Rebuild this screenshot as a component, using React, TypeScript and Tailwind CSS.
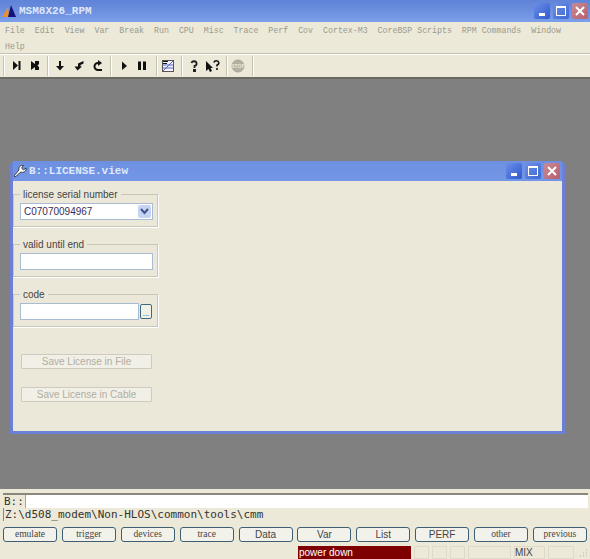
const menus = ["File", "Edit", "View", "Var", "Break", "Run", "CPU", "Misc", "Trace", "Perf", "Cov", "Cortex-M3", "CoreBSP Scripts", "RPM Commands", "Window", "Help"];

const bottomButtons = [
  { label: "emulate", big: false },
  { label: "trigger", big: false },
  { label: "devices", big: false },
  { label: "trace", big: false },
  { label: "Data", big: true },
  { label: "Var", big: true },
  { label: "List", big: true },
  { label: "PERF", big: true },
  { label: "other", big: false },
  { label: "previous", big: false },
];

const sep = <div className="h-[20px] w-[2px] shrink-0 border-l border-r border-l-[#c5c2b2] border-r-white" />;

const TbIcon = ({ children }: { children: React.ReactNode }) => (
  <svg width="16" height="16" viewBox="0 0 16 16" className="shrink-0">
    {children}
  </svg>
);

const CaptionButtons = () => (
  <div className="flex items-center gap-[3px]">
    <div className="flex h-[16px] w-[16px] items-end justify-center rounded-[2px] bg-gradient-to-br from-[#6d8fe6] to-[#2f58cf] pb-[3px]">
      <div className="h-[3px] w-[6px] bg-white" />
    </div>
    <div className="flex h-[16px] w-[16px] items-center justify-center rounded-[2px] bg-gradient-to-br from-[#6d8fe6] to-[#3d67d6]">
      <div className="h-[10px] w-[10px] border border-t-2 border-white" />
    </div>
    <div className="flex h-[16px] w-[16px] items-center justify-center rounded-[2px] bg-gradient-to-br from-[#c98a96] to-[#b5606c]">
      <svg width="10" height="10" viewBox="0 0 10 10">
        <path d="M1 1 L9 9 M9 1 L1 9" stroke="#fff" strokeWidth="2" />
      </svg>
    </div>
  </div>
);

const Group = ({ label, children }: { label: string; children: React.ReactNode }) => (
  <div className="relative h-[33px] w-[145px] border border-[#c9c7b8] shadow-[1px_1px_0_#fff]">
    <span className="absolute left-[6px] top-[-5px] bg-[#ebe8d9] px-[3px] text-[10px] leading-[10px] text-[#444]">{label}</span>
    {children}
  </div>
);

const App = () => {
  return (
    <div className="flex h-[559px] w-[590px] flex-col overflow-hidden bg-[#ece9d8] font-['Liberation_Sans',sans-serif]">
      {/* main title bar */}
      <div className="flex h-[22px] shrink-0 items-center justify-between bg-gradient-to-b from-[#5f83d8] via-[#6d8fdf] to-[#7ba0ea] pl-[2px] pr-[2px]">
        <div className="flex items-center gap-[3px]">
          <svg width="14" height="12" viewBox="0 0 14 12">
            <path d="M0 12 L6 2 L7 12 Z" fill="#e8902a" />
            <path d="M6 12 L9 0 L14 12 Z" fill="#14147a" />
          </svg>
          <span className="font-['Liberation_Mono',monospace] text-[11px] font-bold text-[#dfe8fa]">MSM8X26_RPM</span>
        </div>
        <CaptionButtons />
      </div>

      {/* menu */}
      <div className="flex h-[32px] shrink-0 flex-wrap content-start gap-x-[10px] border-b border-[#c5c2b2] pl-[5px] pr-[4px] pt-[1px] font-['Liberation_Mono',monospace] text-[8.25px] leading-[16px] text-[#9b9a8c]">
        {menus.map((m) => (
          <span key={m}>{m}</span>
        ))}
      </div>

      {/* toolbar */}
      <div className="flex h-[23px] shrink-0 items-center border-t border-white pl-[3px]">
        {sep}
        <div className="flex gap-[3px] pl-[3px] pr-[4px]">
          <TbIcon><path d="M5 3 L10 7.5 L5 12 Z M10.5 3 H12.5 V12 H10.5 Z" fill="#111" /></TbIcon>
          <TbIcon><path d="M4 3 L8 6 V3 H12 V6 L10.5 7.5 L12 9 V12 H8 V9 L4 12 Z" fill="#111" /></TbIcon>
        </div>
        {sep}
        <div className="flex gap-[3px] pl-[3px] pr-[4px]">
          <TbIcon><path d="M7 3 H9 V8 H12 L8 12.5 L4 8 H7 Z" fill="#111" /></TbIcon>
          <TbIcon><path d="M12.5 3 V5.5 L9.5 7 V8.5 H11 L6.5 12.5 L3.5 8.5 H7 V5.5 Z" fill="#111" /></TbIcon>
          <TbIcon>
            <path d="M12 12 H8 A3.5 3.5 0 1 1 8 5 H9" fill="none" stroke="#111" strokeWidth="2" />
            <path d="M8 2 L12 5 L8 8 Z" fill="#111" />
          </TbIcon>
        </div>
        {sep}
        <div className="flex gap-[2px] pl-[4px] pr-[6px]">
          <TbIcon><path d="M6 3.5 L11 8 L6 12 Z" fill="#111" /></TbIcon>
          <TbIcon><path d="M4 3.5 H7 V12 H4 Z M9 3.5 H12 V12 H9 Z" fill="#111" /></TbIcon>
        </div>
        {sep}
        <div className="flex pl-[2px] pr-[5px]">
          <TbIcon>
            <rect x="2.5" y="2.5" width="11" height="11" fill="#f4f4ff" stroke="#555" />
            <path d="M3 13 L13 3 M3 10 H13 M3 7 H13" stroke="#5566c0" strokeWidth="1" />
            <path d="M3 3.5 H8 M3 5.5 H7" stroke="#111" />
          </TbIcon>
        </div>
        {sep}
        <div className="flex gap-[3px] pl-[3px] pr-[5px]">
          <TbIcon>
            <path d="M5.5 5 A2.6 2.4 0 1 1 8.5 8 V10" fill="none" stroke="#222" strokeWidth="1.8" />
            <rect x="7" y="11" width="3" height="3" fill="#222" />
          </TbIcon>
          <TbIcon>
            <path d="M1 3 L1 13 L3.5 11 L5 14 L7 13 L5.5 10 L8 10 Z" fill="#111" />
            <path d="M9 4.5 A2.4 2.2 0 1 1 12 7 V8.5 M12 10 V12" fill="none" stroke="#111" strokeWidth="1.6" />
          </TbIcon>
        </div>
        {sep}
        <div className="flex pl-[2px] pr-[6px]">
          <TbIcon>
            <circle cx="8" cy="8" r="6" fill="#b3b1a4" stroke="#a5a397" />
            <text x="8" y="9.8" textAnchor="middle" fontSize="5" fontWeight="bold" fill="#e8e6da" fontFamily="Liberation Sans, sans-serif">STOP</text>
          </TbIcon>
        </div>
        {sep}
      </div>

      {/* MDI area */}
      <div className="relative h-[412px] shrink-0 border-t-2 border-[#6a6a62] bg-[#808080]">
        <div className="absolute left-[10px] top-[82px] flex h-[273px] w-[555px] flex-col rounded-t-[5px] border-x-[3px] border-b-[3px] border-[#6d80d8] bg-[#6d80d8]">
          <div className="flex h-[20px] shrink-0 items-center justify-between bg-gradient-to-b from-[#6d8fe0] to-[#7397e6] pr-[2px]">
            <div className="flex items-center gap-[2px]">
              <svg width="14" height="14" viewBox="0 0 14 14">
                <path d="M1 12 L2 13 L8 8 A3.5 3.5 0 0 0 13 4 L10.5 6 L8.5 4 L10.5 1.5 A3.5 3.5 0 0 0 6 6 Z" fill="#fff" stroke="#222" strokeWidth="0.8" />
              </svg>
              <span className="font-['Liberation_Mono',monospace] text-[11px] font-bold text-[#dfe8fa]">B::LICENSE.view</span>
            </div>
            <CaptionButtons />
          </div>
          <div className="flex flex-1 flex-col bg-[#ebe8d9] pt-[13px]">
            <Group label="license serial number">
              <div className="ml-[6px] mt-[8px] flex h-[17px] w-[133px] items-center justify-between border border-[#a9bcd2] bg-white pl-[3px] pr-[1px] text-[10px] text-[#3a2b55]">
                <span>C07070094967</span>
                <div className="flex h-[13px] w-[13px] items-center justify-center rounded-[2px] bg-[#c6d4f2]">
                  <svg width="9" height="7" viewBox="0 0 9 7">
                    <path d="M1 1 L4.5 5 L8 1" fill="none" stroke="#3a5590" strokeWidth="2" />
                  </svg>
                </div>
              </div>
            </Group>
            <div className="mt-[17px]">
              <Group label="valid until end">
                <div className="ml-[6px] mt-[8px] h-[17px] w-[133px] border border-[#a9bcd2] bg-white" />
              </Group>
            </div>
            <div className="mt-[17px]">
              <Group label="code">
                <div className="ml-[6px] mt-[8px] flex items-center gap-[1px]">
                  <div className="h-[17px] w-[119px] border border-[#a9bcd2] bg-white" />
                  <div className="flex h-[15px] w-[12px] items-end justify-center rounded-[2px] border border-[#3f6a80] bg-[#f2f1e8] text-[8px] leading-[9px] text-[#333]">...</div>
                </div>
              </Group>
            </div>
            <div className="ml-[8px] mt-[27px] flex h-[15px] w-[131px] items-center justify-center rounded-[1px] border border-[#cdcbbd] bg-[#f1efe6] text-[10px] text-[#b0aea2]">Save License in File</div>
            <div className="ml-[8px] mt-[18px] flex h-[15px] w-[131px] items-center justify-center rounded-[1px] border border-[#cdcbbd] bg-[#f1efe6] text-[10px] text-[#b0aea2]">Save License in Cable</div>
          </div>
        </div>
      </div>

      {/* command line */}
      <div className="ml-[3px] mr-[2px] mt-[4px] flex h-[15px] shrink-0 border-t-2 border-[#8a887c] bg-white font-['DejaVu_Sans_Mono',monospace] text-[11px] leading-[13px] text-[#333]">
        <div className="w-[22px] bg-[#ece9d8] pl-[1px]">B::</div>
        <div className="flex-1 border-l border-[#a8a698]" />
      </div>
      <div className="ml-[3px] flex h-[13px] shrink-0 items-center border-l border-[#8a887c] pl-[1px] font-['DejaVu_Sans_Mono',monospace] text-[11px] leading-[13px] text-[#333]">Z:\d508_modem\Non-HLOS\common\tools\cmm</div>

      {/* softkeys */}
      <div className="mt-[6px] flex h-[15px] shrink-0 items-center justify-between px-[3px]">
        {bottomButtons.map((b) => (
          <div
            key={b.label}
            className={`flex h-[15px] w-[54px] items-center justify-center rounded-[3px] border border-[#3c5f75] bg-[#f3f2ea] text-[#444] ${b.big ? "font-['Liberation_Sans',sans-serif] text-[10px]" : "font-['Liberation_Serif',serif] text-[9.5px]"}`}
          >
            {b.label}
          </div>
        ))}
      </div>

      {/* status bar */}
      <div className="mt-[4px] flex h-[13px] shrink-0 items-stretch pl-[298px] text-[10px] leading-[12px]">
        <div className="flex w-[113px] items-center bg-[#7f0000] pl-[1px] text-white">power down</div>
        <div className="ml-[3px] w-[15px] border border-[#dedbca]" />
        <div className="ml-[3px] w-[15px] border border-[#dedbca]" />
        <div className="ml-[3px] w-[15px] border border-[#dedbca]" />
        <div className="ml-[3px] w-[43px] border border-[#dedbca]" />
        <div className="ml-[3px] flex w-[31px] items-center border border-[#dedbca] text-[#444]">MIX</div>
        <div className="ml-[3px] w-[26px] border border-[#dedbca]" />
        <svg width="12" height="12" viewBox="0 0 12 12" className="ml-[3px] self-end">
          <path d="M9 3 H10 M6 6 H7 M9 6 H10 M3 9 H4 M6 9 H7 M9 9 H10" stroke="#b5b3a5" strokeWidth="1" />
        </svg>
      </div>
    </div>
  );
};

export default App;
